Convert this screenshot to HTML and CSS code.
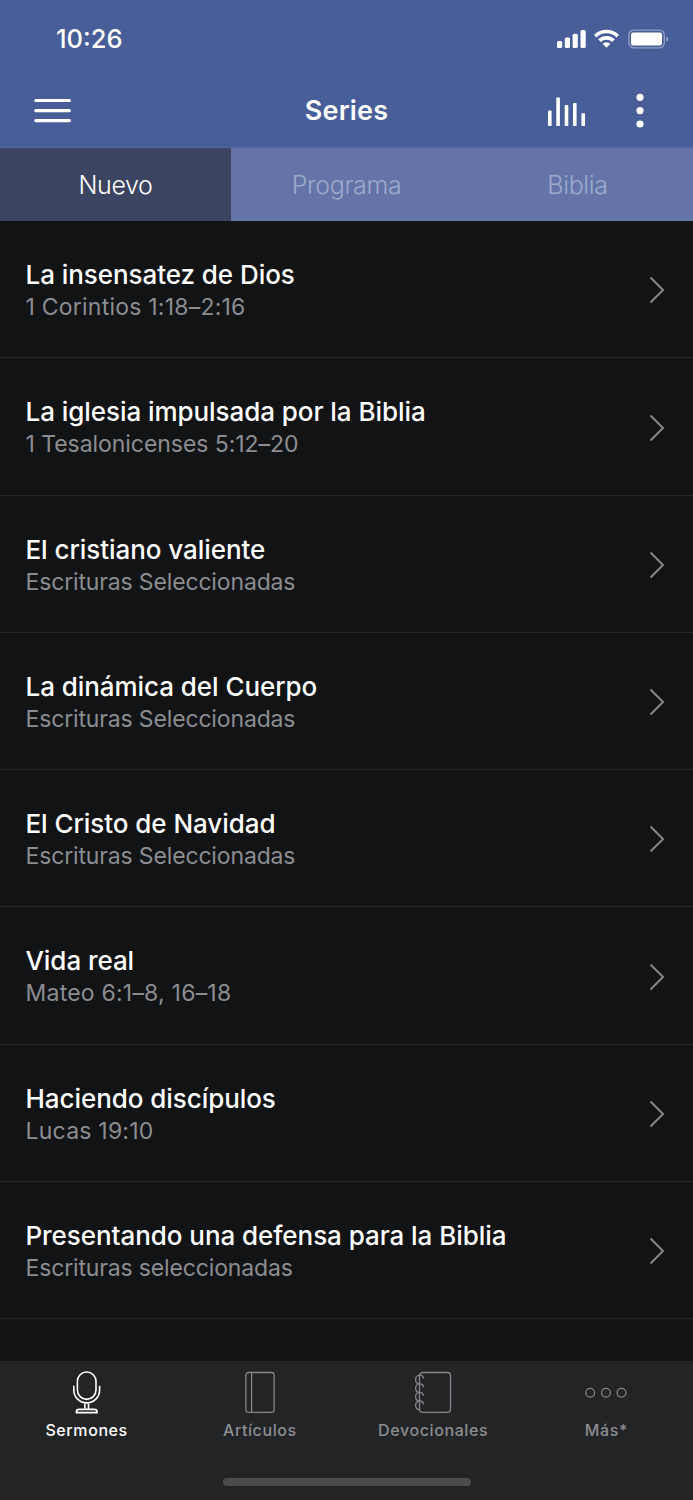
FILE: index.html
```html
<!DOCTYPE html>
<html lang="es">
<head>
<meta charset="utf-8">
<title>Series</title>
<link rel="stylesheet" href="styles.css">
</head>
<body>
<div class="app">
  <header class="header">
    <div class="status">
      <span class="time">10:26</span>
      <svg class="status-icons" width="112" height="20" viewBox="0 0 112 20" fill="#fff">
        <rect x="1" y="12" width="5.2" height="7" rx="1.5"/><rect x="8.8" y="8.6" width="5.2" height="10.4" rx="1.5"/><rect x="16.6" y="4.8" width="5.2" height="14.2" rx="1.5"/><rect x="24.5" y="1" width="5.2" height="18" rx="1.5"/>
        <path d="M38 5.900A18 18 0 0 1 63 5.900L60.500 8.400A14.200 14.200 0 0 0 40.500 8.400Z"/>
        <path d="M42.200 10.300A11.800 11.800 0 0 1 58.800 10.300L56.200 13A8.200 8.200 0 0 0 44.800 13Z"/>
        <path d="M46.600 14.800A5.600 5.600 0 0 1 54.400 14.800L50.500 18.700Z"/>
        <rect x="72.900" y="1.100" width="35.400" height="17.800" rx="5" fill="none" stroke="#fff" stroke-opacity=".4" stroke-width="1.400"/>
        <rect x="75" y="3.600" width="31" height="12.800" rx="2.200"/>
        <path d="M110.400 7.200Q112 8 112 10T110.400 12.800Z" opacity=".5"/>
      </svg>
    </div>
    <div class="nav">
      <svg class="menu" width="38" height="26" viewBox="0 0 38 26" stroke="#fff" stroke-width="3.200" stroke-linecap="round"><path d="M1.800 2.500H35.400M1.800 12.600H35.400M1.800 22.600H35.400"/></svg>
      <h1 class="title">Series</h1>
      <div class="actions">
        <svg width="39" height="30" viewBox="0 0 39 30" fill="#fff"><rect x="1" y="14.600" width="3.600" height="15.400" rx=".8"/><rect x="9.300" y="1.400" width="3.600" height="28.600" rx=".8"/><rect x="17.700" y="9" width="3.600" height="21" rx=".8"/><rect x="26" y="7" width="3.600" height="23" rx=".8"/><rect x="34.400" y="17.200" width="3.600" height="12.800" rx=".8"/></svg>
        <svg width="8" height="36" viewBox="0 0 8 36" fill="#fff"><circle cx="4" cy="4.300" r="3.600"/><circle cx="4" cy="17.600" r="3.600"/><circle cx="4" cy="31" r="3.600"/></svg>
      </div>
    </div>
  </header>
  <nav class="tabs"><span class="tab active">Nuevo</span><span class="tab">Programa</span><span class="tab">Biblia</span></nav>
  <main class="list">
    <article class="row"><div><h2>La insensatez de Dios</h2><p class="loose">1 Corintios 1:18–2:16</p></div><svg class="chev" viewBox="0 0 16 28"><path d="M1.500 1.500L14 14L1.500 26.500"/></svg></article>
    <article class="row"><div><h2>La iglesia impulsada por la Biblia</h2><p class="even">1 Tesalonicenses 5:12–20</p></div><svg class="chev" viewBox="0 0 16 28"><path d="M1.500 1.500L14 14L1.500 26.500"/></svg></article>
    <article class="row"><div><h2>El cristiano valiente</h2><p>Escrituras Seleccionadas</p></div><svg class="chev" viewBox="0 0 16 28"><path d="M1.500 1.500L14 14L1.500 26.500"/></svg></article>
    <article class="row"><div><h2>La dinámica del Cuerpo</h2><p>Escrituras Seleccionadas</p></div><svg class="chev" viewBox="0 0 16 28"><path d="M1.500 1.500L14 14L1.500 26.500"/></svg></article>
    <article class="row"><div><h2>El Cristo de Navidad</h2><p>Escrituras Seleccionadas</p></div><svg class="chev" viewBox="0 0 16 28"><path d="M1.500 1.500L14 14L1.500 26.500"/></svg></article>
    <article class="row"><div><h2>Vida real</h2><p class="loose">Mateo 6:1–8, 16–18</p></div><svg class="chev" viewBox="0 0 16 28"><path d="M1.500 1.500L14 14L1.500 26.500"/></svg></article>
    <article class="row"><div><h2>Haciendo discípulos</h2><p class="loose">Lucas 19:10</p></div><svg class="chev" viewBox="0 0 16 28"><path d="M1.500 1.500L14 14L1.500 26.500"/></svg></article>
    <article class="row"><div><h2>Presentando una defensa para la Biblia</h2><p>Escrituras seleccionadas</p></div><svg class="chev" viewBox="0 0 16 28"><path d="M1.500 1.500L14 14L1.500 26.500"/></svg></article>
  </main>
  <footer class="footer">
    <div class="dock">
      <div class="item on"><svg width="28" height="44" viewBox="0 0 28 44"><rect x="4.400" y="2" width="18.600" height="27.400" rx="9.300"/><path d="M.800 15.800V20A12.900 12.900 0 0 0 26.600 20V15.800M11.900 33V39.400M15.500 33V39.400M3.400 42.600V41.800Q3.400 39.400 6 39.400H21.400Q24 39.400 24 41.800V42.600Z"/></svg><span>Sermones</span></div>
      <div class="item"><svg width="30" height="44" viewBox="0 0 30 44"><rect x=".900" y="2.500" width="28.200" height="39.800" rx="2.500"/><path d="M6.600 2.500V42.300"/></svg><span>Artículos</span></div>
      <div class="item"><svg width="38" height="44" viewBox="0 0 38 44"><rect x="5.500" y="2.500" width="31" height="39.800" rx="3"/><path d="M9.600 8.700C9.300 6.300 7.800 5.200 5.700 5.200C3.200 5.200 1.600 7.200 1.600 9.400C1.600 11.800 3.200 13.700 5.500 13.900M9.600 17.300C9.300 14.900 7.800 13.800 5.700 13.800C3.200 13.800 1.600 15.800 1.600 18C1.600 20.400 3.200 22.300 5.500 22.500M9.600 25.900C9.300 23.500 7.800 22.400 5.700 22.400C3.200 22.400 1.600 24.400 1.600 26.600C1.600 29 3.200 30.900 5.500 31.100M9.600 34.500C9.300 32.100 7.800 31 5.700 31C3.200 31 1.600 33 1.600 35.200C1.600 37.600 3.200 39.500 5.500 39.700"/></svg><span>Devocionales</span></div>
      <div class="item"><svg width="44" height="44" viewBox="0 0 44 44"><circle cx="6.200" cy="22.800" r="4.400"/><circle cx="22" cy="22.800" r="4.400"/><circle cx="37.500" cy="22.800" r="4.400"/></svg><span>Más*</span></div>
    </div>
    <div class="home"></div>
  </footer>
</div>
</body>
</html>
```
FILE: styles.css
```css
* { box-sizing: border-box; }
body { margin: 0; background: #121315; font-family: Inter, "Liberation Sans", sans-serif; }
h1, h2, p { margin: 0; }
svg { display: block; flex: none; }
.app { width: 693px; height: 1500px; display: flex; flex-direction: column; color: #fff; }
.header { height: 147px; background: #485e98; flex: none; }
.status { height: 75px; display: flex; justify-content: space-between; padding: 22px 25px 0 56px; }
.status-icons { margin-top: 7px; }
.time { font-size: 25.5px; line-height: 34px; font-weight: 500; }
.nav { height: 72px; display: grid; grid-template-columns: 1fr auto 1fr; align-items: center; padding: 0 49px 0 34px; }
.title { font-size: 27px; line-height: 34px; font-weight: 600; letter-spacing: .15px; margin-left: 15px; }
.actions { display: flex; gap: 50px; align-items: center; justify-content: flex-end; }
.tabs { height: 74px; flex: none; display: flex; background: #6474a8; border-top: 1px solid #53669e; }
.tab { flex: 1; text-align: center; font-size: 25px; font-weight: 300; line-height: 74px; color: #9da9cb; letter-spacing: -.35px; }
.active { background: #3b4561; color: #fff; }
.list { height: 1140px; flex: none; background: #121315; }
.row { height: 137.25px; border-bottom: 1px solid #242628; display: flex; justify-content: space-between; padding: 38px 28px 0 25.5px; }
.row h2 { font-size: 26px; line-height: 32px; font-weight: 500; letter-spacing: -.06px; white-space: nowrap; }
.row p { font-size: 23px; line-height: 32px; color: #8c8d90; letter-spacing: -.15px; white-space: nowrap; }
.row p.loose { letter-spacing: .22px; }
.row p.even { letter-spacing: -.05px; }
.chev { width: 16px; height: 28px; margin-top: 17.4px; fill: none; stroke: #858688; stroke-width: 2; }
.footer { height: 139px; background: #232426; flex: none; }
.dock { height: 117px; display: flex; padding-top: 9px; }
.item { flex: 1; display: flex; flex-direction: column; align-items: center; color: #8c8d8f; font-size: 16px; line-height: 22px; font-weight: 500; letter-spacing: .6px; gap: 5px; }
.item svg { fill: none; stroke: #858688; stroke-width: 1.3; }
.on { color: #fff; }
.item.on svg { stroke: #fff; stroke-width: 1.6; }
.home { width: 248px; height: 8px; border-radius: 4px; background: #4b4b4b; margin: 0 auto; }
```
